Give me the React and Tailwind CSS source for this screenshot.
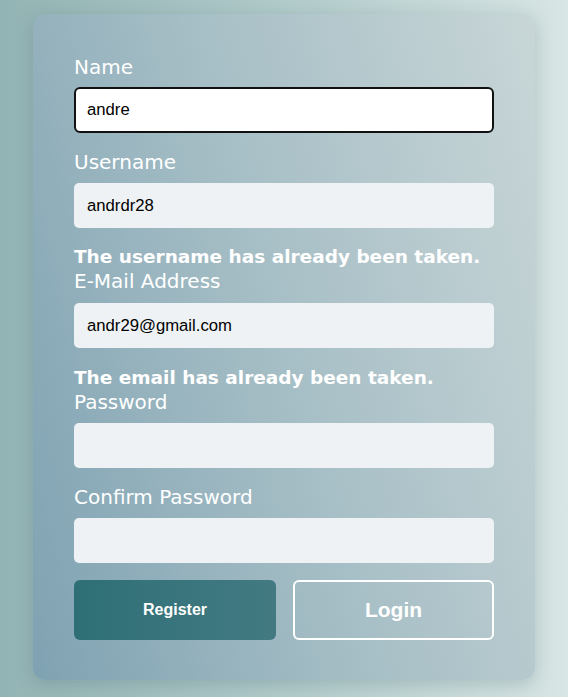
import React from "react";

const labelCls = "block text-[20px] leading-[24px] text-white font-['DejaVu_Sans',sans-serif]";
const errCls = "block text-[18.5px] leading-[24px] font-bold text-white font-['DejaVu_Sans',sans-serif]";
const inputCls = "block w-full h-[45px] rounded-[5px] bg-[#eef2f4] px-[13px] text-[16.7px] text-black font-['Liberation_Sans',Arial,sans-serif] outline-none";

export default function App() {
  return (
    <div className="min-h-[697px] w-[568px] overflow-hidden bg-gradient-to-r from-[#93b4b4] via-[#b2cbcb] to-[#d8e6e5]">
      <div className="ml-[33px] pt-[14px] w-[502px]">
        <div className="rounded-[12px] bg-[linear-gradient(75deg,#7fa2b2_0%,#a3bcc4_45%,#c8d6d7_100%)] shadow-[0_4px_18px_rgba(60,90,100,0.25)] px-[41px] pt-[41px] pb-[40px]">
          <label className={labelCls}>Name</label>
          <input
            className="mt-[8px] block w-full h-[46px] rounded-[6px] bg-white border-2 border-[#111] px-[11px] text-[16.7px] text-black font-['Liberation_Sans',Arial,sans-serif] outline-none"
            defaultValue="andre"
            autoFocus
          />
          <label className={labelCls + " mt-[17px]"}>Username</label>
          <input className={inputCls + " mt-[9px]"} defaultValue="andrdr28" />
          <span className={errCls + " mt-[17px]"}>The username has already been taken.</span>
          <label className={labelCls}>E-Mail Address</label>
          <input className={inputCls + " mt-[10px]"} defaultValue="andr29@gmail.com" />
          <span className={errCls + " mt-[18px]"}>The email has already been taken.</span>
          <label className={labelCls}>Password</label>
          <input className={inputCls + " mt-[9px]"} type="password" />
          <label className={labelCls + " mt-[17px]"}>Confirm Password</label>
          <input className={inputCls + " mt-[9px]"} type="password" />
          <div className="mt-[17px] flex gap-[17px]">
            <button className="h-[60px] w-[202px] rounded-[6px] bg-gradient-to-r from-[#2e6f76] to-[#437a82] text-white font-bold text-[16px] font-['Liberation_Sans',Arial,sans-serif]">
              Register
            </button>
            <button className="h-[60px] flex-1 rounded-[6px] border-2 border-white text-white font-bold text-[21px] font-['Liberation_Sans',Arial,sans-serif]">
              Login
            </button>
          </div>
        </div>
      </div>
    </div>
  );
}
